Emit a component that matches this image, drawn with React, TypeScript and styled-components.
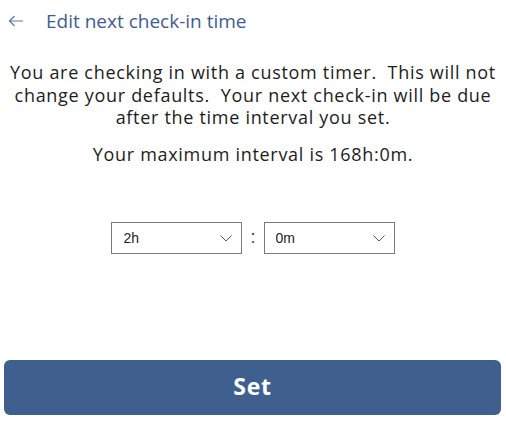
import styled, { createGlobalStyle } from "styled-components";

const GlobalStyle = createGlobalStyle`
  body {
    margin: 0;
    background: #ffffff;
    font-family: "Open Sans", "Noto Sans", sans-serif;
  }
`;

const Page = styled.div`
  width: 506px;
  height: 425px;
  display: flex;
  flex-direction: column;
  box-sizing: border-box;
`;

const Header = styled.div`
  display: flex;
  align-items: center;
  height: 42px;
  padding-left: 6px;
  gap: 20px;
`;

const BackButton = styled.button`
  border: none;
  background: none;
  padding: 0;
  width: 20px;
  height: 20px;
  display: flex;
  align-items: center;
  justify-content: center;
  color: #5a76a3;
`;

const Title = styled.h1`
  margin: 0;
  font-size: 19px;
  font-weight: 400;
  color: #3f5d8e;
`;

const Message = styled.p`
  margin: 19px 0 0;
  padding: 0 2px;
  text-align: center;
  font-size: 18px;
  letter-spacing: 0.7px;
  line-height: 22.5px;
  color: #1d1d1d;
`;

const Limit = styled(Message)`
  margin-top: 14px;
`;

const Pickers = styled.div`
  display: flex;
  justify-content: center;
  align-items: center;
  gap: 8px;
  margin-top: 57px;
`;

const Colon = styled.span`
  font-family: "Liberation Sans", Arial, sans-serif;
  font-size: 18px;
  color: #333;
  padding-bottom: 2px;
`;

const SelectBox = styled.div`
  position: relative;
  width: 131px;
  height: 32px;
`;

const Select = styled.select`
  appearance: none;
  width: 100%;
  height: 100%;
  box-sizing: border-box;
  border: 1px solid #7a7a7a;
  border-radius: 0;
  background: #fff;
  padding: 0 0 0 11px;
  font-family: "Liberation Sans", Arial, sans-serif;
  font-size: 14px;
  color: #222;
  outline: none;
`;

const Chevron = styled.svg`
  position: absolute;
  right: 10px;
  top: 13px;
  pointer-events: none;
`;

const Spacer = styled.div`
  flex: 1;
`;

const SetButton = styled.button`
  margin: 0 5px 10px 4px;
  height: 55px;
  padding-bottom: 4px;
  border: none;
  border-radius: 6px;
  background: #3f5f8f;
  color: #fff;
  font-family: "Open Sans", "Noto Sans", sans-serif;
  font-size: 23px;
  font-weight: 700;
  letter-spacing: 0.8px;
`;

const hours = Array.from({ length: 169 }, (_, i) => `${i}h`);
const minutes = Array.from({ length: 60 }, (_, i) => `${i}m`);

const Picker = ({ value, options }: { value: string; options: string[] }) => (
  <SelectBox>
    <Select defaultValue={value}>
      {options.map((o) => (
        <option key={o} value={o}>
          {o}
        </option>
      ))}
    </Select>
    <Chevron width="12" height="7" viewBox="0 0 12 7">
      <path d="M0.5 0.5 L6 6 L11.5 0.5" fill="none" stroke="#555" strokeWidth="1" />
    </Chevron>
  </SelectBox>
);

export default function App() {
  return (
    <Page>
      <GlobalStyle />
      <Header>
        <BackButton aria-label="Back">
          <svg width="16" height="12" viewBox="0 0 16 12">
            <path d="M15 6 H1.5 M6.5 1 L1.5 6 L6.5 11" fill="none" stroke="currentColor" strokeWidth="1.2" />
          </svg>
        </BackButton>
        <Title>Edit next check-in time</Title>
      </Header>
      <Message>
        You are checking in with a custom timer.&nbsp; This will not change your defaults.&nbsp; Your next check-in
        will be due after the time interval you set.
      </Message>
      <Limit>Your maximum interval is 168h:0m.</Limit>
      <Pickers>
        <Picker value="2h" options={hours} />
        <Colon>:</Colon>
        <Picker value="0m" options={minutes} />
      </Pickers>
      <Spacer />
      <SetButton>Set</SetButton>
    </Page>
  );
}
